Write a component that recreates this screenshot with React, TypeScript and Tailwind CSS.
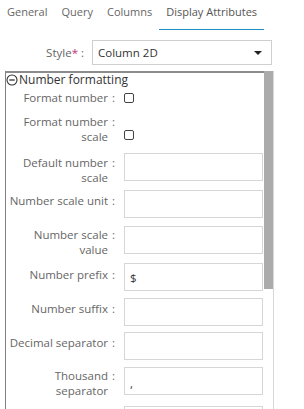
import React from "react";

type Row =
  | { kind: "check"; label: string[]; mt: string; h: string; cbMt: string; lpt: string }
  | { kind: "input"; label: string[]; mt: string; lpt: string; value?: string };

const rows: Row[] = [
  { kind: "check", label: ["Format number"], mt: "mt-[3px]", h: "h-[15px]", cbMt: "mt-[3px]", lpt: "pt-0" },
  { kind: "check", label: ["Format number", "scale"], mt: "mt-[9px]", h: "h-[30px]", cbMt: "mt-[16px]", lpt: "pt-0" },
  { kind: "input", label: ["Default number", "scale"], mt: "mt-[9px]", lpt: "pt-[2px]" },
  { kind: "input", label: ["Number scale unit"], mt: "mt-[9px]", lpt: "pt-[3px]" },
  { kind: "input", label: ["Number scale", "value"], mt: "mt-[8px]", lpt: "pt-[1px]" },
  { kind: "input", label: ["Number prefix"], mt: "mt-[9px]", lpt: "pt-[4px]", value: "$" },
  { kind: "input", label: ["Number suffix"], mt: "mt-[7px]", lpt: "pt-[3px]" },
  { kind: "input", label: ["Decimal separator"], mt: "mt-[6px]", lpt: "pt-[3px]" },
  { kind: "input", label: ["Thousand", "separator"], mt: "mt-[7px]", lpt: "pt-[1px]", value: "," },
  { kind: "input", label: [""], mt: "mt-[11px]", lpt: "pt-[3px]" },
];

function Label({ lines, pt }: { lines: string[]; pt: string }) {
  return (
    <div className={`flex shrink-0 ${pt}`}>
      <div className="w-[102px] text-right text-[11.5px] leading-[15px] text-[#666] whitespace-nowrap">
        {lines.map((l, i) => (
          <div key={i}>{l}</div>
        ))}
      </div>
      <div className="w-[16px] pl-[4px] text-[11.5px] leading-[15px] text-[#666]">{lines[0] ? ":" : ""}</div>
    </div>
  );
}

export default function App() {
  return (
    <div className="w-[304px] h-[409px] overflow-hidden bg-white font-['Open_Sans',sans-serif]">
      {/* Tabs */}
      <div className="flex h-[30px] text-[11px] leading-[16px] text-[#666]">
        {["General", "Query", "Columns", "Display Attributes"].map((t, i) => (
          <div
            key={t}
            className={`px-[7px] pt-[4px] h-[30px] ${i === 3 ? "border-b border-[#1b8fc6] text-[#555]" : ""}`}
          >
            {t}
          </div>
        ))}
      </div>

      {/* Style row */}
      <div className="mt-[10px] flex items-center">
        <div className="w-[84px] text-right text-[11.5px] leading-[16px] text-[#666]">
          Style<span className="text-[#c2306f]">*</span> :
        </div>
        <div className="ml-[8px] w-[180px] h-[25px] border border-[#cfcfcf] flex items-center justify-between pl-[5px] pr-[9px]">
          <span className="text-[11.5px] text-[#333]">Column 2D</span>
          <span className="w-0 h-0 border-l-[4px] border-r-[4px] border-t-[4px] border-l-transparent border-r-transparent border-t-[#222]" />
        </div>
      </div>

      {/* Fieldset */}
      <div className="mt-[6px] ml-[5px] w-[269px] h-[400px] flex">
        <div className="flex-1 border-l border-t-2 border-l-[#808080] border-t-[#8c8c8c]">
          <div className="flex items-center h-[14px] text-[12px] leading-[14px] text-[#333]">
            <svg width="12" height="12" viewBox="0 0 12 12" className="shrink-0">
              <circle cx="6" cy="6" r="5" fill="none" stroke="#333" strokeWidth="1.1" />
              <line x1="3.3" y1="6" x2="8.7" y2="6" stroke="#333" strokeWidth="1.3" />
            </svg>
            <span className="ml-[1px]">Number formatting</span>
          </div>
          {rows.map((r, i) =>
            r.kind === "check" ? (
              <div key={i} className={`flex ${r.mt} ${r.h}`}>
                <Label lines={r.label} pt={r.lpt} />
                <div className={`${r.cbMt} w-[10px] h-[10px] border border-[#444] rounded-[2px] bg-white`} />
              </div>
            ) : (
              <div key={i} className={`flex ${r.mt} h-[28px]`}>
                <Label lines={r.label} pt={r.lpt} />
                <div className="w-[139px] h-[28px] border border-[#d6d6d6] pl-[5px] pt-[6px] text-[11.5px] leading-[16px] text-[#333]">
                  {r.value === "," ? <span className="inline-block pt-[2px]">,</span> : r.value}
                </div>
              </div>
            )
          )}
        </div>
        <div className="w-[10px] flex flex-col border-r border-[#d8d8d8]">
          <div className="w-[9px] h-[218px] bg-[#ababab]" />
        </div>
      </div>
    </div>
  );
}
